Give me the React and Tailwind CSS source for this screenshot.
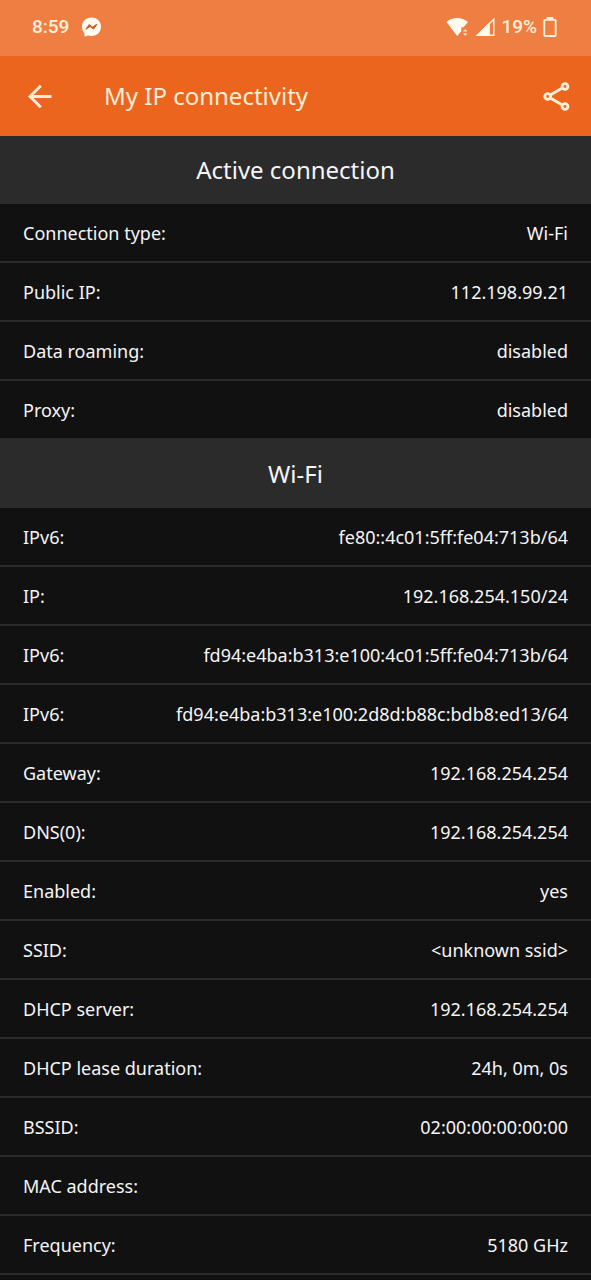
const activeConnection = [
  { label: 'Connection type:', value: 'Wi-Fi' },
  { label: 'Public IP:', value: '112.198.99.21' },
  { label: 'Data roaming:', value: 'disabled' },
  { label: 'Proxy:', value: 'disabled' },
];

const wifi = [
  { label: 'IPv6:', value: 'fe80::4c01:5ff:fe04:713b/64' },
  { label: 'IP:', value: '192.168.254.150/24' },
  { label: 'IPv6:', value: 'fd94:e4ba:b313:e100:4c01:5ff:fe04:713b/64' },
  { label: 'IPv6:', value: 'fd94:e4ba:b313:e100:2d8d:b88c:bdb8:ed13/64' },
  { label: 'Gateway:', value: '192.168.254.254' },
  { label: 'DNS(0):', value: '192.168.254.254' },
  { label: 'Enabled:', value: 'yes' },
  { label: 'SSID:', value: '<unknown ssid>' },
  { label: 'DHCP server:', value: '192.168.254.254' },
  { label: 'DHCP lease duration:', value: '24h, 0m, 0s' },
  { label: 'BSSID:', value: '02:00:00:00:00:00' },
  { label: 'MAC address:', value: '' },
  { label: 'Frequency:', value: '5180 GHz' },
];

function StatusBar() {
  return (
    <div className="flex h-14 items-center justify-between bg-[#ee7e42] pb-0.5 pl-8 pr-[34px] font-['Roboto',sans-serif] text-[19px] font-medium text-[#fff0dc]">
      <div className="flex items-center gap-3">
        <span>8:59</span>
        <svg viewBox="0 0 20 20" className="h-5 w-5" aria-hidden="true">
          <path
            d="M10.500.5C5 .5 1 4.500 1 9.700c0 2.800 1.100 5.100 2.500 6.800v2.600c0 .4.4.7.8.5l2.200-1c1.100.3 2.800.4 4 .4 5.500 0 9.500-4 9.500-9.300S16 .5 10.500.5z"
            fill="#fffaf0"
          />
          <path
            d="M4.800 12.300l3.400-4.800 3.300 2.500 4.500-2.900-3.400 5-3.500-2.500z"
            fill="#c9602a"
            stroke="#c9602a"
            strokeLinejoin="round"
          />
        </svg>
      </div>

      <div className="flex items-center">
        <svg viewBox="0 0 23 20" className="mr-1.5 h-5 w-[23px]" fill="#fffaf0" aria-hidden="true">
          <path d="M.5 5C3.300 2.500 7.200 1 11.200 1s7.900 1.500 10.700 4l-4.300 5.200h-2.300v4L11.200 19z" />
          <path d="M17 14.600l2.200-2.700 2.200 2.700zM17 16.300h4.400L19.200 19z" opacity="0.8" />
        </svg>
        <svg viewBox="0 0 20 20" className="mr-1.5 h-5 w-5" aria-hidden="true">
          <path d="M18.800 2.300v16H2.800z" fill="none" stroke="#fff0dc" strokeWidth="1.500" />
          <path d="M14.800 5V19H.6z" fill="#fffaf0" />
        </svg>
        <span>19%</span>
        <svg viewBox="0 0 14 20" className="ml-1.5 h-5 w-3.5" fill="none" stroke="#fff0dc" strokeWidth="1.800" aria-hidden="true">
          <path d="M4.500 2.500V1h5v1.500" />
          <rect x="1.300" y="2.800" width="11.400" height="16.200" rx="0.800" />
        </svg>
      </div>
    </div>
  );
}

function AppBar() {
  return (
    <header className="flex h-20 items-center bg-[#eb651e] px-5 text-[#ffeed8]">
      <button type="button" aria-label="Back" className="flex h-10 w-10 items-center justify-center">
        <svg viewBox="0 0 24 24" className="h-6 w-6" fill="none" stroke="currentColor" strokeWidth="2.800" aria-hidden="true">
          <path d="M23.500 12.500H2.500M12.800 1.700L2 12.500l10.800 10.800" />
        </svg>
      </button>
      <h1 className="ml-11 flex-1 text-2xl">My IP connectivity</h1>
      <button type="button" aria-label="Share" className="flex h-10 w-7 items-center justify-end">
        <svg viewBox="0 0 28 30" className="h-[30px] w-7" fill="none" stroke="currentColor" strokeWidth="2.900" aria-hidden="true">
          <path d="M7.300 14L18.900 7.200M7.300 17l11.600 6.800" />
          <circle cx="4.700" cy="15.500" r="2.900" />
          <circle cx="22" cy="5.500" r="2.900" />
          <circle cx="22" cy="25.500" r="2.900" />
        </svg>
      </button>
    </header>
  );
}

function Section({ title, rows }) {
  return (
    <section>
      <h2 className="flex h-[68px] items-center justify-center bg-[#2b2b2b] text-2xl">{title}</h2>
      <dl>
        {rows.map((row, i) => (
          <div
            key={i}
            className="flex h-[59px] items-center justify-between gap-4 border-b-2 border-[#2a2a2a] px-[23px] text-lg"
          >
            <dt>{row.label}</dt>
            <dd>{row.value}</dd>
          </div>
        ))}
      </dl>
    </section>
  );
}

export default function App() {
  return (
    <div className="min-h-screen bg-[#111111] font-['Noto_Sans',sans-serif] text-[#f5f5f5]">
      <StatusBar />
      <AppBar />
      <main>
        <Section title="Active connection" rows={activeConnection} />
        <Section title="Wi-Fi" rows={wifi} />
      </main>
    </div>
  );
}
